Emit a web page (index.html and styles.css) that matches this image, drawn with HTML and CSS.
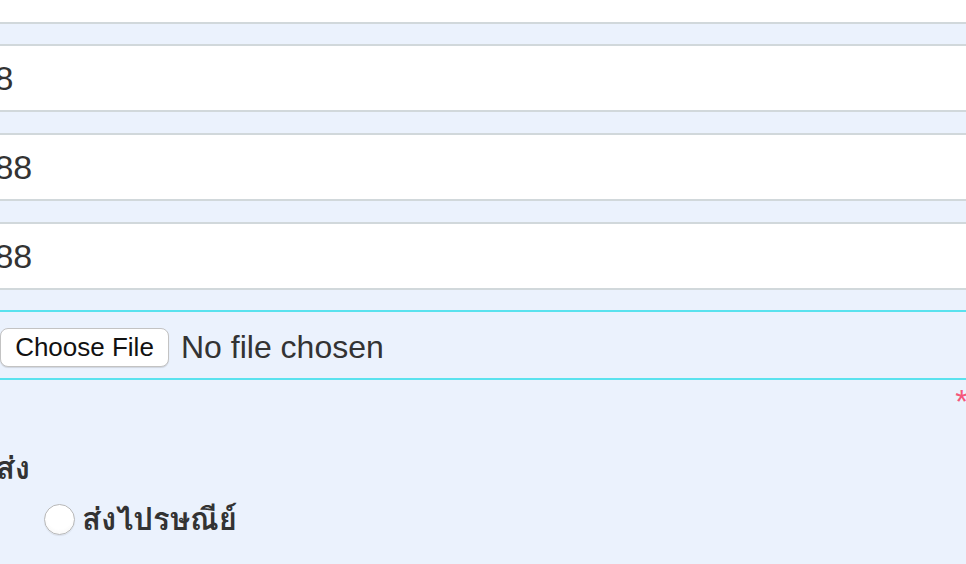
FILE: index.html
```html
<!DOCTYPE html>
<html lang="th">
<head>
<meta charset="utf-8">
<title>Form</title>
<link rel="stylesheet" href="styles.css">
</head>
<body>
<form class="form">
  <input class="field field-top" type="text" value="">
  <input class="field" type="text" value="0813458">
  <input class="field gap1" type="text" value="08123488">
  <input class="field gap1" type="text" value="08999988">
  <div class="file-row">
    <button type="button" class="file-btn">Choose File</button>
    <span class="file-text">No file chosen</span>
  </div>
  <div class="req-row"><span class="req">*</span></div>
  <div class="label-row"><span class="label">ช่องทางการจัดส่ง</span></div>
  <div class="radio-row">
    <span class="radio"></span>
    <span class="radio-label">ส่งไปรษณีย์</span>
  </div>
</form>
</body>
</html>
```

FILE: styles.css
```css
html, body {
  margin: 0;
  padding: 0;
  background: #ebf2fd;
  overflow: hidden;
  width: 966px;
  height: 564px;
}

.form {
  margin-left: -150px;
  width: 1300px;
  display: flex;
  flex-direction: column;
  gap: 20px;
  font-family: "Liberation Sans", Arial, sans-serif;
}

.field {
  display: block;
  box-sizing: border-box;
  width: 100%;
  height: 68px;
  margin: 0;
  border: 2px solid #d1d8db;
  background: #fff;
  padding: 0 0 0 29px;
  font-family: "Liberation Sans", Arial, sans-serif;
  font-size: 34px;
  color: #333;
  outline: none;
}

.field-top {
  margin-top: -44px;
}

.gap1 {
  margin-top: 1px;
}

.file-row {
  box-sizing: border-box;
  height: 70px;
  border-top: 2px solid #5ae2ee;
  border-bottom: 2px solid #5ae2ee;
  padding: 4px 0 0 150px;
  display: flex;
  align-items: center;
  gap: 12px;
}

.file-btn {
  box-sizing: border-box;
  width: 169px;
  height: 39px;
  margin: 0;
  padding: 0;
  border: 1px solid #c3c3c3;
  border-radius: 8px;
  background: #fff;
  box-shadow: 0 1px 1px rgba(0, 0, 0, 0.12);
  font-family: "Liberation Sans", Arial, sans-serif;
  font-size: 26px;
  color: #111;
}

.file-text {
  font-size: 32px;
  color: #333;
}

.req-row {
  display: flex;
  justify-content: flex-end;
  margin-top: -13px;
  padding-right: 182px;
  height: 30px;
}

.req {
  font-size: 33px;
  line-height: 30px;
  color: #f5577b;
}

.label-row {
  margin-top: 11px;
  padding-left: 136px;
  height: 40px;
  overflow: visible;
}

.label {
  font-family: "Loma", "Garuda", "Noto Sans Thai", "Thonburi", "Noto Sans", sans-serif;
  font-weight: bold;
  font-size: 31px;
  line-height: 40px;
  color: #333;
  display: block;
  direction: rtl;
  width: 44px;
  white-space: nowrap;
}

.radio-row {
  display: flex;
  align-items: center;
  padding-left: 194px;
  gap: 7px;
  margin-top: -14px;
}

.radio {
  width: 31px;
  height: 31px;
  box-sizing: border-box;
  border-radius: 50%;
  border: 1px solid #b8b8b8;
  background: radial-gradient(circle at 50% 40%, #ffffff 55%, #f1f1f1 100%);
  box-shadow: 0 1px 1px rgba(0, 0, 0, 0.08);
}

.radio-label {
  font-family: "Loma", "Garuda", "Noto Sans Thai", "Thonburi", "Noto Sans", sans-serif;
  font-weight: bold;
  font-size: 31px;
  color: #333;
}
```
